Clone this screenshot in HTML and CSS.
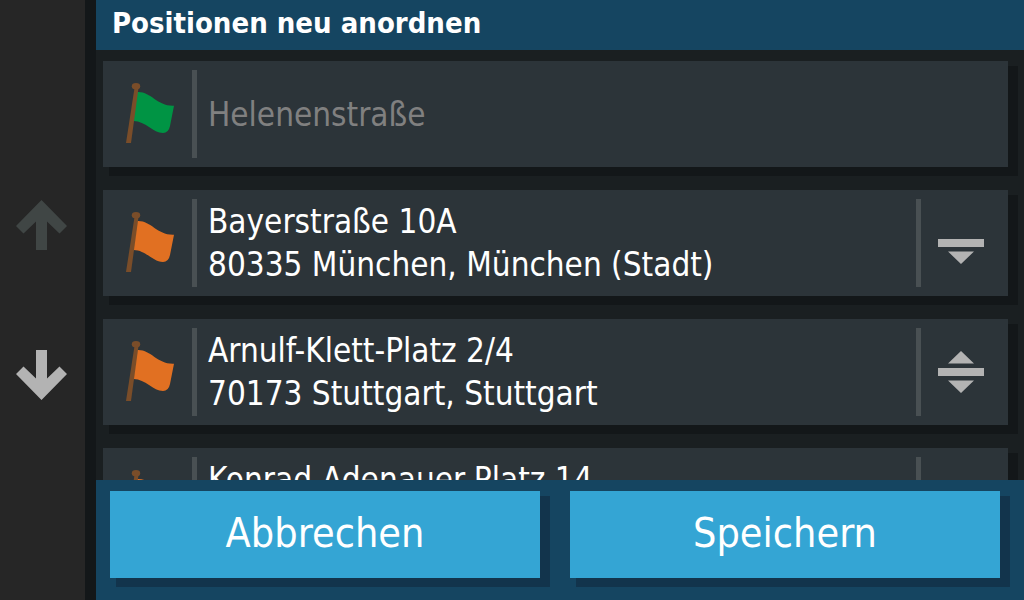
FILE: index.html
```html
<!DOCTYPE html>
<html lang="de">
<head>
  <meta charset="UTF-8">
  <meta name="viewport" content="width=device-width, initial-scale=1.0">
  <title>Positionen neu anordnen</title>
  <link rel="stylesheet" href="styles.css">
</head>
<body>
  <!-- shared icons -->
  <svg class="icon-defs" aria-hidden="true">
    <symbol id="icon-flag" viewBox="0 0 48 60">
      <path fill="currentColor" d="M11 9C25 8 31 23.500 48 22.700L44 43Q42.500 50 37 50C27 50 19 37.500 7 38Z"/>
      <path fill="#7a4d29" d="M8.500 5H12.500L5 60H0Z"/>
      <ellipse fill="#7a4d29" cx="10" cy="3.300" rx="4.200" ry="3.300"/>
    </symbol>
    <symbol id="icon-arrow" viewBox="0 0 51 50">
      <path fill="currentColor" d="M25.500 0L51 26L43.500 33.500L31 21.500V50H20V21.500L7.500 33.500L0 26Z"/>
    </symbol>
  </svg>

  <div class="app">
    <nav class="sidebar">
      <button type="button" class="scroll-btn" aria-label="Nach oben" disabled>
        <svg><use href="#icon-arrow"/></svg>
      </button>
      <button type="button" class="scroll-btn scroll-down" aria-label="Nach unten">
        <svg><use href="#icon-arrow"/></svg>
      </button>
    </nav>

    <main class="content">
      <h1 class="title">Positionen neu anordnen</h1>

      <ul class="list">
        <li class="card">
          <svg class="flag flag-start"><use href="#icon-flag"/></svg>
          <div class="address disabled">Helenenstraße</div>
        </li>
        <li class="card">
          <svg class="flag"><use href="#icon-flag"/></svg>
          <div class="address">Bayerstraße 10A<br>80335 München, München (Stadt)</div>
          <button type="button" class="move-btn" aria-label="Nach unten verschieben">
            <svg viewBox="0 0 46 42">
              <path d="M0 17H46V25H0ZM10 29.500H36L23 42Z"/>
            </svg>
          </button>
        </li>
        <li class="card">
          <svg class="flag"><use href="#icon-flag"/></svg>
          <div class="address">Arnulf-Klett-Platz 2/4<br>70173 Stuttgart, Stuttgart</div>
          <button type="button" class="move-btn" aria-label="Verschieben">
            <svg viewBox="0 0 46 42">
              <path d="M0 17H46V25H0ZM10 29.500H36L23 42ZM10 12.500H36L23 0Z"/>
            </svg>
          </button>
        </li>
        <li class="card">
          <svg class="flag"><use href="#icon-flag"/></svg>
          <div class="address">Konrad-Adenauer-Platz 14<br>&nbsp;</div>
          <button type="button" class="move-btn" aria-label="Nach oben verschieben">
            <svg viewBox="0 0 46 42">
              <path d="M0 17H46V25H0ZM10 12.500H36L23 0Z"/>
            </svg>
          </button>
        </li>
      </ul>

      <div class="footer">
        <button type="button" class="btn">Abbrechen</button>
        <button type="button" class="btn">Speichern</button>
      </div>
    </main>
  </div>
</body>
</html>
```
FILE: styles.css
```css
* {
  box-sizing: border-box;
}
body {
  margin: 0;
  background-color: #1a1f21;
  color: #fff;
  font-family: 'DejaVu Sans Condensed', 'DejaVu Sans', sans-serif;
}
button {
  border: none;
  padding: 0;
  background: none;
  color: inherit;
  font-family: inherit;
  cursor: pointer;
}
svg {
  display: block;
}
.icon-defs {
  display: none;
}
.app {
  display: flex;
  height: 100vh;
}

/* scroll bar on the left */
.sidebar {
  flex: none;
  width: 96px;
  padding-right: 2px;
  border-right: 11px solid #131719;
  background-color: #262626;
  display: flex;
  flex-direction: column;
  align-items: center;
  justify-content: center;
  gap: 100px;
}
.scroll-btn {
  color: #b3b3b3;
}
.scroll-btn:disabled {
  color: #404645;
  cursor: default;
}
.scroll-btn svg {
  width: 51px;
  height: 50px;
}
.scroll-down svg {
  transform: rotate(180deg);
}

.content {
  flex: 1;
  min-width: 0;
  display: flex;
  flex-direction: column;
}
.title {
  flex: none;
  margin: 0;
  padding: 0 16px 4px;
  background-color: #154561;
  font-size: 29px;
  line-height: 46px;
  font-weight: bold;
}

/* list of stops */
.list {
  flex: 1;
  min-height: 0;
  margin: 0;
  padding: 11px 16px 0 7px;
  list-style: none;
  overflow: hidden;
  display: flex;
  flex-direction: column;
  gap: 23px;
}
.card {
  flex: none;
  display: flex;
  align-items: center;
  height: 106px;
  padding: 9px 0;
  background-color: #2c3439;
  box-shadow: 8px 7px 0 2px #131719;
}
.flag {
  flex: none;
  width: 48px;
  height: 60px;
  margin: 0 18px 2px 23px;
  color: #e17022;
}
.flag-start {
  color: #009444;
}
.address {
  flex: 1;
  min-width: 0;
  height: 88px;
  padding-left: 11px;
  border-left: 5px solid #495053;
  align-content: center;
  font-size: 33px;
  line-height: 43px;
  white-space: nowrap;
}
.address.disabled {
  color: #808080;
}
.move-btn {
  flex: none;
  width: 92px;
  height: 88px;
  padding-left: 17px;
  border-left: 5px solid #495053;
}
.move-btn svg {
  width: 46px;
  height: 42px;
  fill: #b3b3b3;
}

.footer {
  flex: none;
  display: flex;
  gap: 30px;
  padding: 11px 24px 22px 14px;
  background-color: #154561;
}
.btn {
  flex: 1;
  height: 87px;
  padding-bottom: 3px;
  background-color: #34a5d4;
  box-shadow: 8px 7px 0 2px #12344c;
  font-size: 41px;
}
```
